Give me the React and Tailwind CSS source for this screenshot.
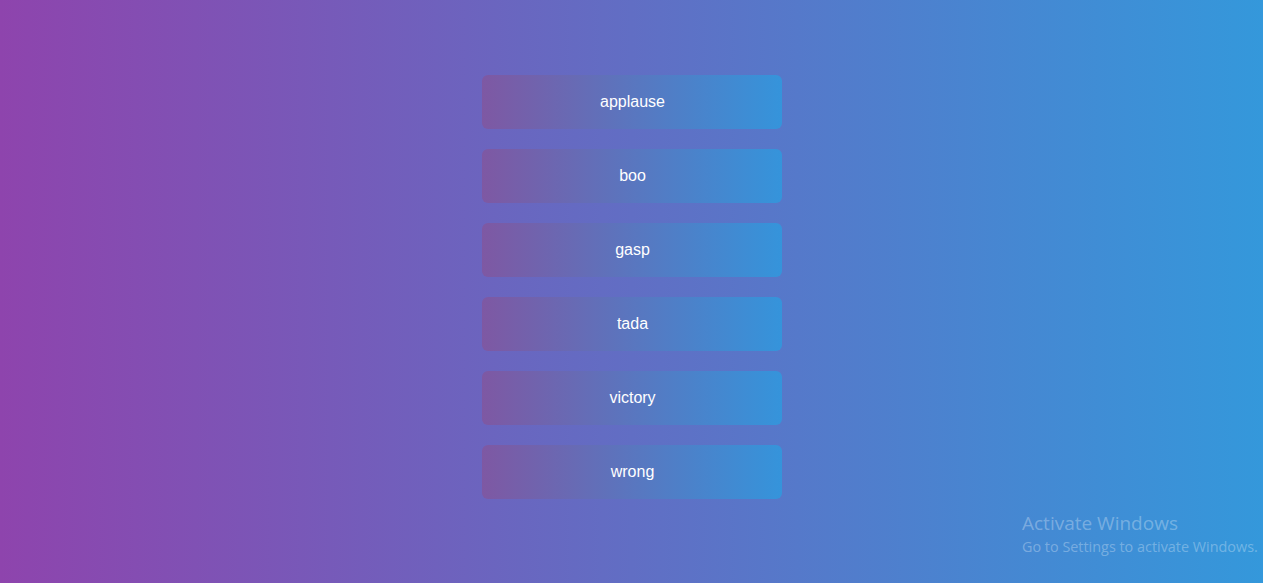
import React from 'react';

const sounds = ['applause', 'boo', 'gasp', 'tada', 'victory', 'wrong'];

export default function App() {
    return (
        <div className="relative min-h-[583px] h-screen w-full overflow-hidden bg-[linear-gradient(to_right,#8e44ad,#3498db)] font-['Liberation_Sans',Arial,sans-serif]">
            <div className="flex flex-col items-center gap-5 pt-[75px]">
                {sounds.map((s) => (
                    <button
                        key={s}
                        className="w-[300px] h-[54px] pl-[2px] rounded-[6px] bg-[linear-gradient(to_right,#7e58a3,#3594db)] text-white text-base"
                    >
                        {s}
                    </button>
                ))}
            </div>

            {/* OS watermark */}
            <div className="absolute left-[1022px] top-[512px] text-white/30 font-['Open_Sans',sans-serif] leading-tight pointer-events-none">
                <div className="text-[19px]">Activate Windows</div>
                <div className="text-[14.4px] mt-[2px]">Go to Settings to activate Windows.</div>
            </div>
        </div>
    );
}
